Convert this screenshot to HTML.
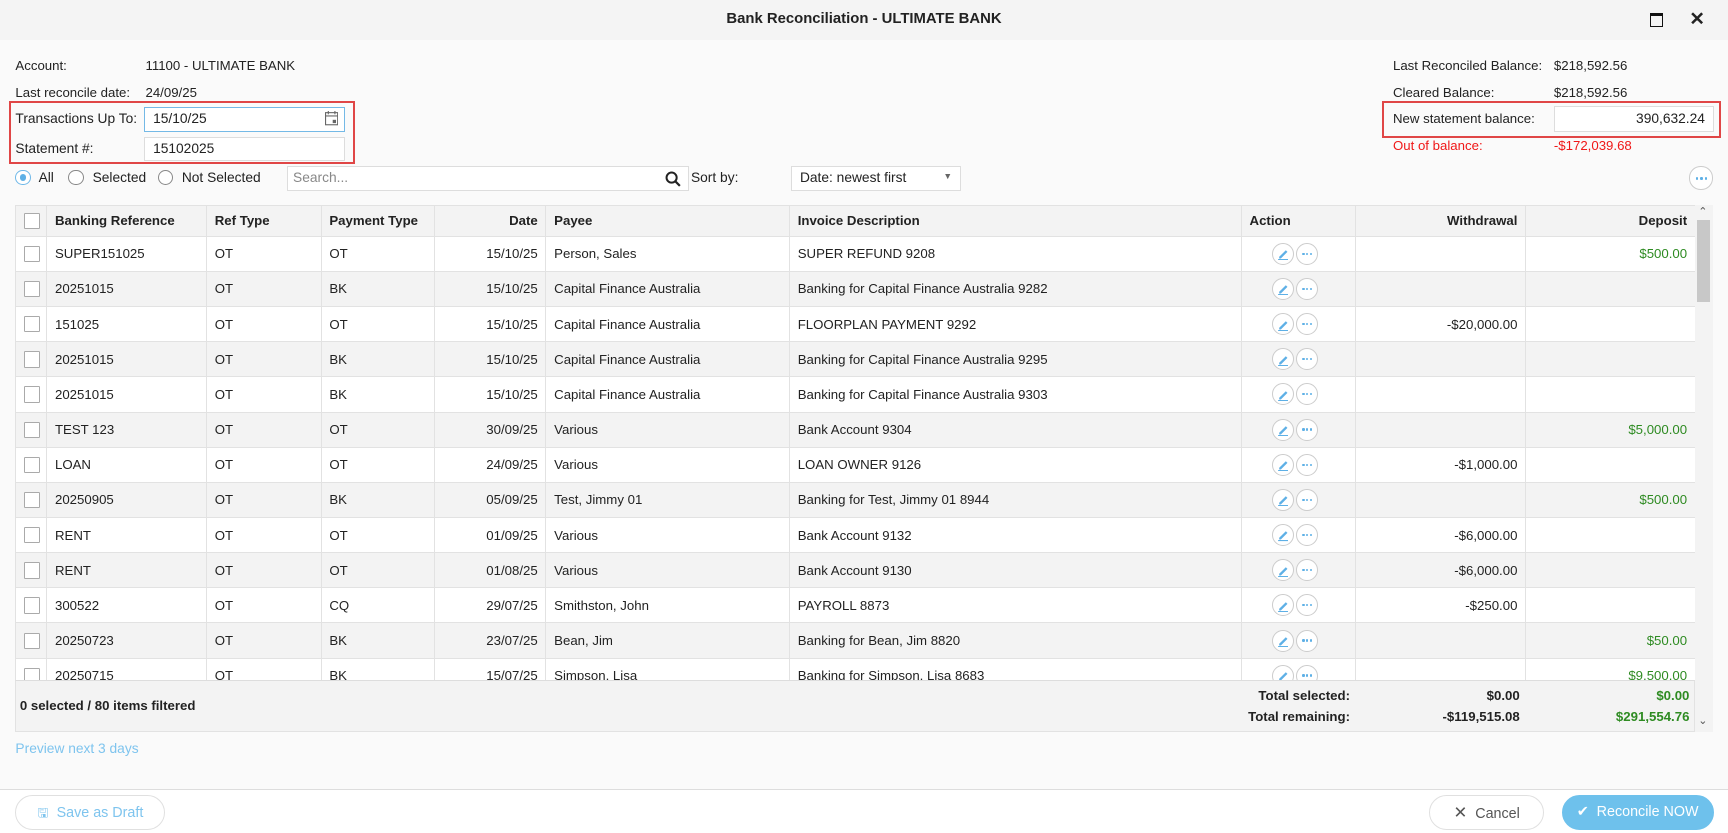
<!DOCTYPE html>
<html><head><meta charset="utf-8"><style>
html,body{margin:0;padding:0;width:1728px;height:833px;overflow:hidden;background:#fafafa}
#w{zoom:1.10204;width:1568px;height:756px;position:relative;font-family:"Liberation Sans",sans-serif;font-size:12px;color:#222;background:#fafafa}
.a{position:absolute;white-space:nowrap}
.tb{left:0;top:0;width:1568px;height:36px;background:#f4f4f4}
.inp{position:absolute;background:#fff;border:1px solid #ddd;box-sizing:border-box;font-size:12.5px;line-height:20px;padding:0 7px}
.radio{position:absolute;width:14px;height:14px;border:1px solid #888;border-radius:50%;box-sizing:border-box;background:#fff}
table{position:absolute;left:14px;top:186px;border-collapse:collapse;table-layout:fixed;width:1524px}
td,th{border:1px solid #e2e2e2;height:31px;padding:0 7px;font-size:12px;white-space:nowrap;overflow:hidden;text-align:left;background:#fff}
th{height:27px;background:#f3f3f3;font-weight:bold}
#tb tr:nth-child(even) td{background:#f3f3f3}
.r{text-align:right}
.g{color:#2e8b22}
.cb{display:inline-block;width:13px;height:13px;border:1px solid #aaa;background:#fff;vertical-align:middle;border-radius:1px}
.ic{display:inline-block;width:20px;height:20px;border:1px solid #ccc;border-radius:50%;box-sizing:border-box;vertical-align:middle;background:#fff;position:relative;margin-right:2px}
.btn{position:absolute;border:1px solid #e0e0e0;border-radius:17px;box-sizing:border-box;background:#fff;font-size:13px;text-align:center;line-height:30px}
.dt{position:absolute;top:8px;width:2px;height:2px;border-radius:1px;background:#5eb0e6}
</style></head><body><div id="w">
<div class="a tb"></div>
<div class="a" style="left:0;width:1568px;top:10px;text-align:center;font-weight:bold;font-size:13.5px">Bank Reconciliation - ULTIMATE BANK</div>
<div class="a" style="left:1497px;top:12px;width:10px;height:9px;border:1.5px solid #111;border-top-width:3px"></div>
<div class="a" style="left:1533px;top:7px;font-size:17px;font-weight:bold">✕</div>

<div class="a" style="left:14px;top:53px">Account:</div>
<div class="a" style="left:132px;top:53px">11100 - ULTIMATE BANK</div>
<div class="a" style="left:14px;top:77px">Last reconcile date:</div>
<div class="a" style="left:132px;top:77px">24/09/25</div>
<div class="a" style="left:8px;top:92px;width:314px;height:57px;border:2px solid #e04646;box-sizing:border-box"></div>
<div class="a" style="left:14px;top:101px;font-size:12.5px">Transactions Up To:</div>
<div class="inp" style="left:131px;top:97px;width:182px;height:23px;border-color:#74b9e6">15/10/25</div>
<svg class="a" style="left:295px;top:101px" width="12" height="13" viewBox="0 0 12 13"><rect x="0.5" y="1.5" width="11" height="11" fill="none" stroke="#666"/><line x1="0.5" y1="4.5" x2="11.5" y2="4.5" stroke="#666"/><rect x="7" y="8" width="3" height="3" fill="#666"/><line x1="3" y1="0" x2="3" y2="3" stroke="#666"/><line x1="9" y1="0" x2="9" y2="3" stroke="#666"/></svg>
<div class="a" style="left:14px;top:128px;font-size:12.5px">Statement #:</div>
<div class="inp" style="left:131px;top:124px;width:182px;height:22px">15102025</div>

<div class="a" style="left:1264px;top:53px">Last Reconciled Balance:</div>
<div class="a" style="left:1410px;top:53px">$218,592.56</div>
<div class="a" style="left:1264px;top:77px">Cleared Balance:</div>
<div class="a" style="left:1410px;top:77px">$218,592.56</div>
<div class="a" style="left:1254px;top:92px;width:308px;height:33px;border:2px solid #e04646;box-sizing:border-box"></div>
<div class="a" style="left:1264px;top:101px">New statement balance:</div>
<div class="inp" style="left:1410px;top:96px;width:145px;height:24px;text-align:right;line-height:22px">390,632.24</div>
<div class="a" style="left:1264px;top:125px;color:#f01818">Out of balance:</div>
<div class="a" style="left:1410px;top:125px;color:#f01818">-$172,039.68</div>

<div class="radio" style="left:14px;top:154px;border-color:#6fb8e8"><div style="position:absolute;left:3px;top:3px;width:6px;height:6px;border-radius:50%;background:#5eb0e6"></div></div>
<div class="a" style="left:35px;top:154px;font-size:12.5px">All</div>
<div class="radio" style="left:62px;top:154px"></div>
<div class="a" style="left:84px;top:154px;font-size:12.5px">Selected</div>
<div class="radio" style="left:143px;top:154px"></div>
<div class="a" style="left:165px;top:154px;font-size:12.5px">Not Selected</div>
<div class="inp" style="left:260px;top:151px;width:365px;height:22px;color:#888;line-height:20px;padding-left:5px">Search...</div>
<svg class="a" style="left:603px;top:155px" width="15" height="15" viewBox="0 0 15 15"><circle cx="6" cy="6" r="4.6" fill="none" stroke="#222" stroke-width="1.8"/><line x1="9.5" y1="9.5" x2="13.5" y2="13.5" stroke="#222" stroke-width="2"/></svg>
<div class="a" style="left:627px;top:154px;font-size:12.5px">Sort by:</div>
<div class="inp" style="left:718px;top:151px;width:154px;height:22px">Date: newest first</div>
<div class="a" style="left:856px;top:155px;font-size:8px;color:#666">▼</div>
<div class="a" style="left:1533px;top:151px;width:21px;height:21px;border:1px solid #ccc;border-radius:50%;box-sizing:border-box;background:#fff"><span class="dt" style="left:5px;top:9px"></span><span class="dt" style="left:9px;top:9px"></span><span class="dt" style="left:13px;top:9px"></span></div>

<table>
<colgroup><col style="width:28px"><col style="width:145px"><col style="width:104px"><col style="width:103px"><col style="width:101px"><col style="width:221px"><col style="width:410px"><col style="width:104px"><col style="width:154px"><col style="width:154px"></colgroup>
<thead><tr><th><span class="cb"></span></th><th>Banking Reference</th><th>Ref Type</th><th>Payment Type</th><th class="r">Date</th><th>Payee</th><th>Invoice Description</th><th>Action</th><th class="r">Withdrawal</th><th class="r">Deposit</th></tr></thead>
<tbody id="tb"></tbody>
</table>
<div class="a" style="left:14px;top:617px;width:1524px;height:47px;background:#f3f3f3;border:1px solid #e2e2e2;border-top:1px solid #ddd;box-sizing:border-box"></div>
<div class="a" style="left:18px;top:633px;font-weight:bold">0 selected / 80 items filtered</div>
<div class="a" style="left:1000px;width:225px;text-align:right;top:624px;font-weight:bold">Total selected:</div>
<div class="a" style="left:1000px;width:225px;text-align:right;top:643px;font-weight:bold">Total remaining:</div>
<div class="a" style="left:1230px;width:149px;text-align:right;top:624px;font-weight:bold">$0.00</div>
<div class="a" style="left:1230px;width:149px;text-align:right;top:643px;font-weight:bold">-$119,515.08</div>
<div class="a g" style="left:1384px;width:149px;text-align:right;top:624px;font-weight:bold">$0.00</div>
<div class="a g" style="left:1384px;width:149px;text-align:right;top:643px;font-weight:bold">$291,554.76</div>
<div class="a" style="left:1538px;top:186px;width:16px;height:478px;background:#f3f3f3"></div>
<div class="a" style="left:1540px;top:200px;width:12px;height:74px;background:#c8c8c8"></div>
<div class="a" style="left:1541px;top:186px;font-size:10px;color:#555">⌃</div>
<div class="a" style="left:1541px;top:648px;font-size:10px;color:#555">⌄</div>

<div class="a" style="left:14px;top:672px;color:#7ec4ee;font-size:12.5px">Preview next 3 days</div>

<div class="a" style="left:0;top:716px;width:1568px;height:40px;background:#fff;border-top:1px solid #ddd"></div>
<div class="btn" style="left:14px;top:721px;width:136px;height:32px;color:#7ec4ee"><span style="font-size:12px">🖫</span>&nbsp; Save as Draft</div>
<div class="btn" style="left:1297px;top:721px;width:104px;height:32px;color:#555"><span style="font-size:15px">✕</span>&nbsp; Cancel</div>
<div class="btn" style="left:1417px;top:721px;width:138px;height:32px;background:#6ec1ec;border-color:#6ec1ec;color:#fff">✔&nbsp; Reconcile NOW</div>
</div>
<script>
var d=[["SUPER151025","OT","OT","15/10/25","Person, Sales","SUPER REFUND 9208","","$500.00"],
["20251015","OT","BK","15/10/25","Capital Finance Australia","Banking for Capital Finance Australia 9282","",""],
["151025","OT","OT","15/10/25","Capital Finance Australia","FLOORPLAN PAYMENT 9292","-$20,000.00",""],
["20251015","OT","BK","15/10/25","Capital Finance Australia","Banking for Capital Finance Australia 9295","",""],
["20251015","OT","BK","15/10/25","Capital Finance Australia","Banking for Capital Finance Australia 9303","",""],
["TEST 123","OT","OT","30/09/25","Various","Bank Account 9304","","$5,000.00"],
["LOAN","OT","OT","24/09/25","Various","LOAN OWNER 9126","-$1,000.00",""],
["20250905","OT","BK","05/09/25","Test, Jimmy 01","Banking for Test, Jimmy 01 8944","","$500.00"],
["RENT","OT","OT","01/09/25","Various","Bank Account 9132","-$6,000.00",""],
["RENT","OT","OT","01/08/25","Various","Bank Account 9130","-$6,000.00",""],
["300522","OT","CQ","29/07/25","Smithston, John","PAYROLL 8873","-$250.00",""],
["20250723","OT","BK","23/07/25","Bean, Jim","Banking for Bean, Jim 8820","","$50.00"],
["20250715","OT","BK","15/07/25","Simpson, Lisa","Banking for Simpson, Lisa 8683","","$9,500.00"]];
var pen='<span class="ic"><svg style="position:absolute;left:4px;top:4px" width="11" height="11" viewBox="0 0 11 11"><path d="M2 8 L8 2 L9.5 3.5 L3.5 9.5 L2 9.5Z" fill="#5eb0e6"/><line x1="1" y1="10.5" x2="10" y2="10.5" stroke="#5eb0e6"/></svg></span>';
var dots='<span class="ic"><span class="dt" style="left:5px"></span><span class="dt" style="left:8.5px"></span><span class="dt" style="left:12px"></span></span>';
var h='';d.forEach(function(r){h+='<tr><td><span class="cb"></span></td><td>'+r[0]+'</td><td>'+r[1]+'</td><td>'+r[2]+'</td><td class="r">'+r[3]+'</td><td>'+r[4]+'</td><td>'+r[5]+'</td><td style="padding-left:27px">'+pen+dots+'</td><td class="r">'+r[6]+'</td><td class="r g">'+r[7]+'</td></tr>';});
document.getElementById('tb').innerHTML=h;
</script>
</body></html>
